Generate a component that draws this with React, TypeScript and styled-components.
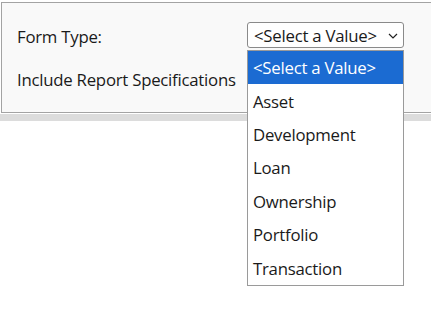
import styled, { createGlobalStyle } from "styled-components";

const options = [
  "<Select a Value>",
  "Asset",
  "Development",
  "Loan",
  "Ownership",
  "Portfolio",
  "Transaction",
];

export default function App() {
  return (
    <>
      <GlobalStyle />
      <Page>
        <Panel>
          <Row>
            <Label $offset={3}>Form Type:</Label>
            <SelectWrap>
              <SelectBox>
                <span>&lt;Select a Value&gt;</span>
                <svg width="10" height="6" viewBox="0 0 10 6">
                  <path
                    d="M1 1 L5 5 L9 1"
                    fill="none"
                    stroke="#222"
                    strokeWidth="1.2"
                  />
                </svg>
              </SelectBox>
              <List>
                {options.map((o, i) => (
                  <Option key={o} $selected={i === 0}>
                    {o}
                  </Option>
                ))}
              </List>
            </SelectWrap>
          </Row>
          <Row>
            <Label>Include Report Specifications</Label>
          </Row>
        </Panel>
        <Strip />
      </Page>
    </>
  );
}

const GlobalStyle = createGlobalStyle`
  html, body {
    margin: 0;
    padding: 0;
    background: #fff;
  }
  body {
    font-family: "Open Sans", "Noto Sans", sans-serif;
    color: #1a1a1a;
  }
`;

const Page = styled.div`
  width: 431px;
  height: 323px;
  padding-top: 2px;
  box-sizing: border-box;
`;

const Panel = styled.div`
  margin-left: 1px;
  height: 111px;
  box-sizing: border-box;
  border: 1px solid #a3a3a3;
  border-right: none;
  background: #f9f9f9;
  padding: 19px 0 0 15px;
  display: flex;
  flex-direction: column;
  gap: 18px;
`;

const Row = styled.div`
  display: flex;
  align-items: center;
  height: 26px;
`;

const Label = styled.div<{ $offset?: number }>`
  width: 230px;
  font-size: 16.8px;
  letter-spacing: -0.25px;
  padding-top: ${(p) => p.$offset ?? 0}px;
  white-space: nowrap;
`;

const SelectWrap = styled.div`
  position: relative;
`;

const SelectBox = styled.div`
  width: 157px;
  height: 26px;
  box-sizing: border-box;
  border: 1px solid #8a8a8a;
  border-radius: 3px;
  background: #fff;
  display: flex;
  align-items: center;
  justify-content: space-between;
  padding: 0 5px 0 6px;
  font-size: 16.8px;
  letter-spacing: -0.25px;

  svg {
    margin-top: 1px;
  }
`;

const List = styled.div`
  position: absolute;
  top: 28px;
  left: 0;
  width: 157px;
  box-sizing: border-box;
  border: 1px solid #9a9a9a;
  background: #fff;
  z-index: 2;
`;

const Option = styled.div<{ $selected?: boolean }>`
  height: 33.4px;
  display: flex;
  align-items: center;
  padding-left: 5px;
  font-size: 16.8px;
  letter-spacing: -0.25px;
  background: ${(p) => (p.$selected ? "#1b6bd2" : "transparent")};
  color: ${(p) => (p.$selected ? "#fff" : "#1a1a1a")};
`;

const Strip = styled.div`
  height: 7px;
  background: #dcdcdc;
  margin-top: 1px;
`;
